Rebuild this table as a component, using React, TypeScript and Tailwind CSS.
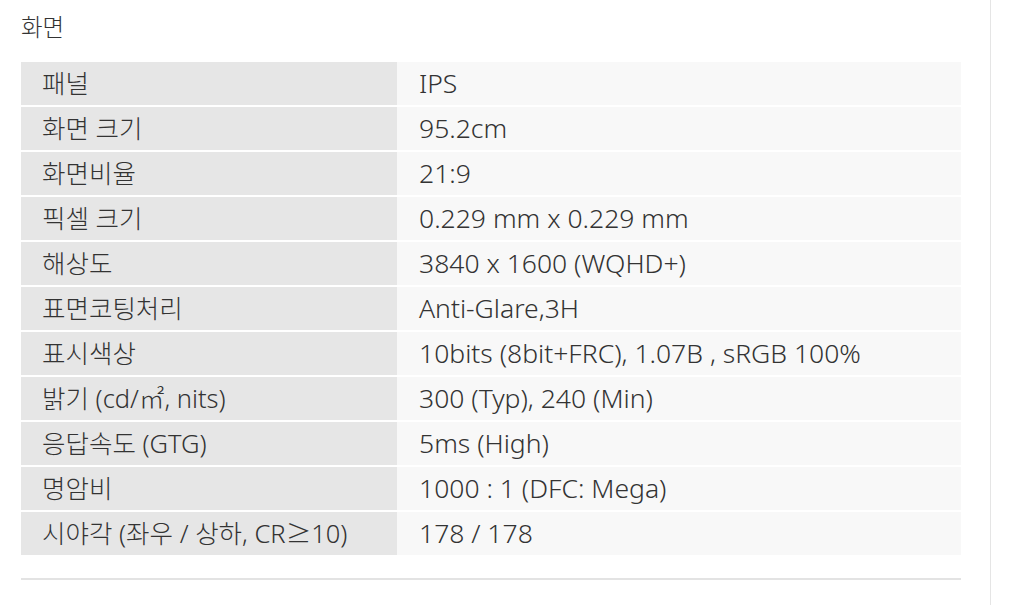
import React from "react";

const rows: [string, string][] = [
  ["패널", "IPS"],
  ["화면 크기", "95.2cm"],
  ["화면비율", "21:9"],
  ["픽셀 크기", "0.229 mm x 0.229 mm"],
  ["해상도", "3840 x 1600 (WQHD+)"],
  ["표면코팅처리", "Anti-Glare,3H"],
  ["표시색상", "10bits (8bit+FRC), 1.07B , sRGB 100%"],
  ["밝기 (cd/㎡, nits)", "300 (Typ), 240 (Min)"],
  ["응답속도 (GTG)", "5ms (High)"],
  ["명암비", "1000 : 1 (DFC: Mega)"],
  ["시야각 (좌우 / 상하, CR≥10)", "178 / 178"],
];

export default function App() {
  return (
    <div
      className="w-[1027px] h-[605px] bg-white flex overflow-hidden text-[#333333] font-light"
      style={{ fontFamily: '"Noto Sans", "Noto Sans CJK KR", sans-serif' }}
    >
      <div className="w-[991px] shrink-0 border-r border-[#e5e5e5] pl-[21px]">
        <div className="h-[62px] flex items-center text-[23.5px] pb-[6px]">화면</div>
        <div className="w-[940px] flex flex-col">
          {rows.map(([k, v], i) => (
            <div
              key={i}
              className={`flex h-[43px] ${i > 0 ? "mt-[2px]" : ""}`}
            >
              <div className="w-[376px] shrink-0 bg-[#e6e6e6] pl-[21px] flex items-center text-[25.5px] whitespace-nowrap">
                {k}
              </div>
              <div className="flex-1 bg-[#f8f8f8] pl-[22px] flex items-center text-[26.5px] whitespace-nowrap">
                {v}
              </div>
            </div>
          ))}
        </div>
        <div className="w-[940px] mt-[23px] h-[2px] bg-[#e3e3e3]" />
      </div>
      <div className="flex-1" />
    </div>
  );
}
